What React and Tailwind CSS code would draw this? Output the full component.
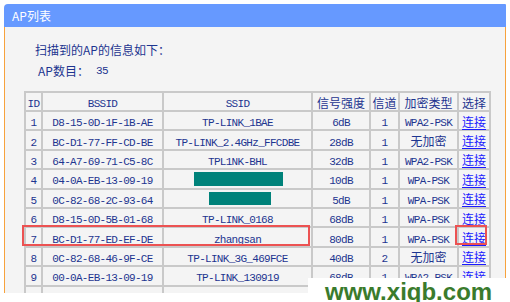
import React from "react";

const rows = [
  ["1", "D8-15-0D-1F-1B-AE", "TP-LINK_1BAE", "6dB", "1", "WPA2-PSK"],
  ["2", "BC-D1-77-FF-CD-BE", "TP-LINK_2.4GHz_FFCDBE", "28dB", "1", "无加密"],
  ["3", "64-A7-69-71-C5-8C", "TPL1NK-BHL", "32dB", "1", "WPA2-PSK"],
  ["4", "04-0A-EB-13-09-19", "BAR1", "10dB", "1", "WPA-PSK"],
  ["5", "0C-82-68-2C-93-64", "BAR2", "5dB", "1", "WPA-PSK"],
  ["6", "D8-15-0D-5B-01-68", "TP-LINK_0168", "68dB", "1", "WPA-PSK"],
  ["7", "BC-D1-77-ED-EF-DE", "zhangsan", "80dB", "1", "WPA-PSK"],
  ["8", "0C-82-68-46-9F-CE", "TP-LINK_3G_469FCE", "40dB", "2", "无加密"],
  ["9", "00-0A-EB-13-09-19", "TP-LINK_130919", "68dB", "1", "WPA2-PSK"],
];

const mono = "font-['Liberation_Mono',monospace] text-[11px] tracking-[-0.7px]";
const cjk = "font-['Noto_Sans_CJK_SC','Liberation_Sans',sans-serif] text-[12px]";
const cell = "border-2 border-[#c9c9c9] p-0 text-center align-middle leading-none";

function Txt({ v }) {
  if (/[\u4e00-\u9fff]/.test(v)) return <span className={cjk}>{v}</span>;
  return <span className={mono}>{v}</span>;
}

export default function App() {
  return (
    <div className="relative w-[510px] h-[302px] overflow-hidden bg-white">
      <div className="px-[4px] pt-[4px]">
        <div className="h-[23px] bg-[#6699ff] rounded-tl-[4px] rounded-tr-[1px] flex items-center pl-[8px]">
          <span className="text-white text-[12px] font-['Noto_Sans_CJK_SC',sans-serif] leading-none">AP列表</span>
        </div>
        <div className="h-[266px] overflow-hidden bg-[#f4f4f4] border-l border-r border-[#f7a23c] text-[#1d3590]">
          <div className="pl-[30px] pt-[15px] text-[12px] font-['Noto_Sans_CJK_SC',sans-serif] leading-[16px]">
            扫描到的AP的信息如下：
          </div>
          <div className="pl-[33px] pt-[5px] flex items-center text-[12px] font-['Noto_Sans_CJK_SC',sans-serif] leading-[16px]">
            <span className="w-[58px]">AP数目：</span>
            <span className={mono}>35</span>
          </div>
          <div className="relative ml-[19px] mt-[12px] w-[465px]">
            <table className="table-fixed border-collapse w-[465px]">
              <colgroup>
                <col className="w-[17px]" />
                <col className="w-[121px]" />
                <col className="w-[149px]" />
                <col className="w-[58px]" />
                <col className="w-[29px]" />
                <col className="w-[59px]" />
                <col className="w-[32px]" />
              </colgroup>
              <thead>
                <tr className="h-[19px]">
                  <th className={`${cell} font-normal`}><span className={mono}>ID</span></th>
                  <th className={`${cell} font-normal`}><span className={mono}>BSSID</span></th>
                  <th className={`${cell} font-normal`}><span className={mono}>SSID</span></th>
                  <th className={`${cell} font-normal`}><span className={cjk}>信号强度</span></th>
                  <th className={`${cell} font-normal`}><span className={cjk}>信道</span></th>
                  <th className={`${cell} font-normal`}><span className={cjk}>加密类型</span></th>
                  <th className={`${cell} font-normal`}><span className={cjk}>选择</span></th>
                </tr>
              </thead>
              <tbody>
                {rows.map((r) => (
                  <tr key={r[0]} className="h-[19.4px]">
                    <td className={cell}><span className={mono}>{r[0]}</span></td>
                    <td className={cell}><span className={mono}>{r[1]}</span></td>
                    <td className={cell}>
                      {r[2] === "BAR1" ? (
                        <div className="mx-auto w-[89px] h-[14px] bg-[#00827a] translate-x-[1px]" />
                      ) : r[2] === "BAR2" ? (
                        <div className="mx-auto w-[62px] h-[13px] bg-[#00827a] translate-x-[2px]" />
                      ) : (
                        <Txt v={r[2]} />
                      )}
                    </td>
                    <td className={cell}><span className={mono}>{r[3]}</span></td>
                    <td className={cell}><span className={mono}>{r[4]}</span></td>
                    <td className={cell}><Txt v={r[5]} /></td>
                    <td className={cell}>
                      <span className={`${cjk} text-[#1a1aff] underline underline-offset-2`}>连接</span>
                    </td>
                  </tr>
                ))}
                <tr className="h-[19.4px]">
                  <td className={cell} /><td className={cell} /><td className={cell} /><td className={cell} />
                  <td className={cell} /><td className={cell} /><td className={cell} />
                </tr>
              </tbody>
            </table>
            <div className="absolute z-10 left-[-2px] top-[134px] w-[288px] h-[21px] border-2 border-[#ec5252]" />
            <div className="absolute z-10 left-[431px] top-[134px] w-[32px] h-[20px] border-2 border-[#ec5252]" />
          </div>
        </div>
      </div>
      <div className="absolute left-[308px] top-[278px] w-[202px] h-[24px] bg-white flex items-end pl-[17px]">
        <span className="font-['Liberation_Sans',Arial,sans-serif] font-bold text-[24px] leading-[24px] text-[#3a7b2c] translate-y-[2px]">
          www.xiqb.com
        </span>
      </div>
    </div>
  );
}
